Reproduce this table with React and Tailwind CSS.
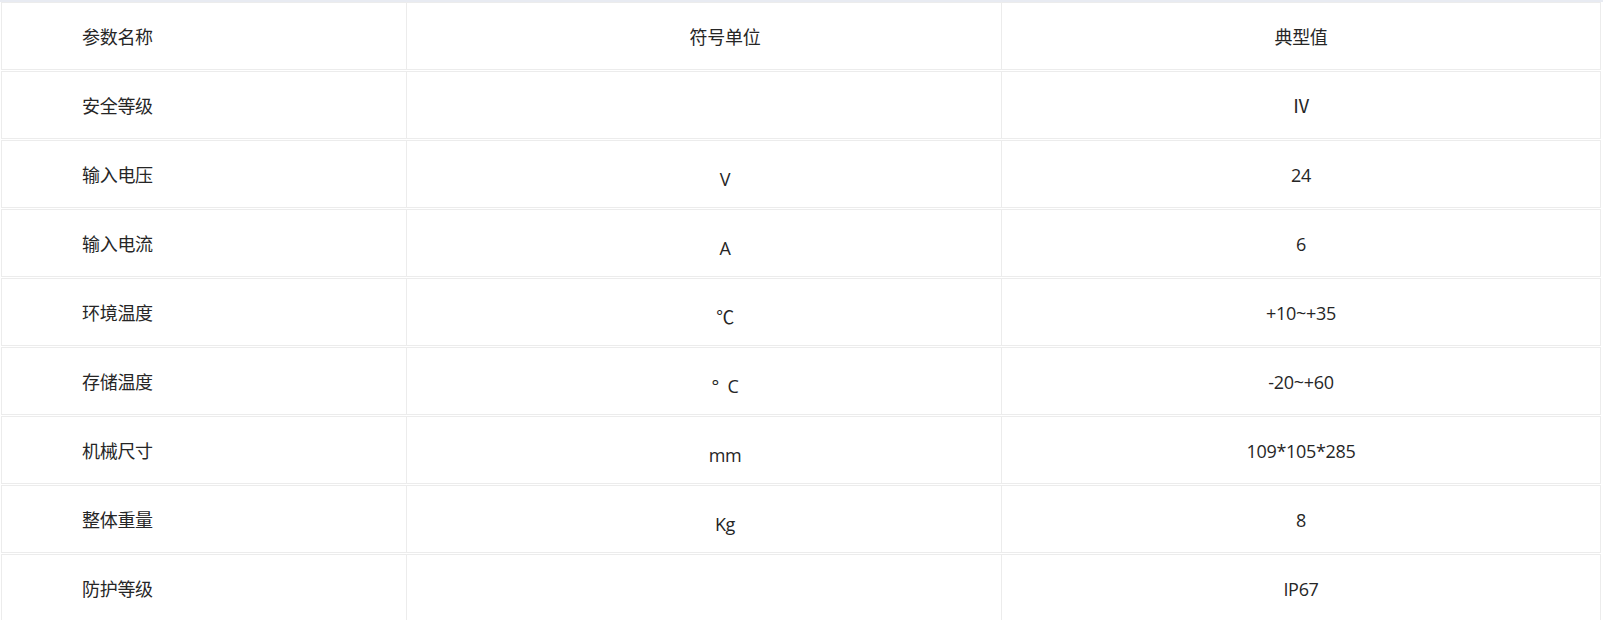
const rows = [
  { name: '安全等级', unit: '', value: 'Ⅳ' },
  { name: '输入电压', unit: 'V', value: '24' },
  { name: '输入电流', unit: 'A', value: '6' },
  { name: '环境温度', unit: '℃', value: '+10~+35' },
  { name: '存储温度', unit: '°  C', value: '-20~+60' },
  { name: '机械尺寸', unit: 'mm', value: '109*105*285' },
  { name: '整体重量', unit: 'Kg', value: '8' },
  { name: '防护等级', unit: '', value: 'IP67' },
]

function Row({ name, unit, value, header }) {
  return (
    <div className="flex h-[68px] w-[1600px] ml-[1px] border border-[#ececec] bg-white text-[18px] tracking-[-0.3px] text-[#262626]">
      <div className="w-[405px] shrink-0 border-r border-[#ececec] flex items-center pl-[80px] pt-[3px]">
        {name}
      </div>
      <div className="w-[595px] shrink-0 border-r border-[#ececec] flex items-center justify-center pl-[42px] pt-[3px]">
        {header ? unit : <span className="mt-[8px] whitespace-pre">{unit}</span>}
      </div>
      <div className="w-[598px] shrink-0 flex items-center justify-center pt-[3px]">
        {value}
      </div>
    </div>
  )
}

export default function App() {
  return (
    <div
      className="w-full min-h-[620px] bg-white overflow-hidden"
      style={{ fontFamily: '"Open Sans", "Noto Sans CJK SC", sans-serif' }}
    >
      <div className="h-[2px] bg-[#e8ebf2]" />
      <div className="flex flex-col gap-px">
        <Row header name="参数名称" unit="符号单位" value="典型值" />
        {rows.map((r) => (
          <Row key={r.name} {...r} />
        ))}
      </div>
    </div>
  )
}
